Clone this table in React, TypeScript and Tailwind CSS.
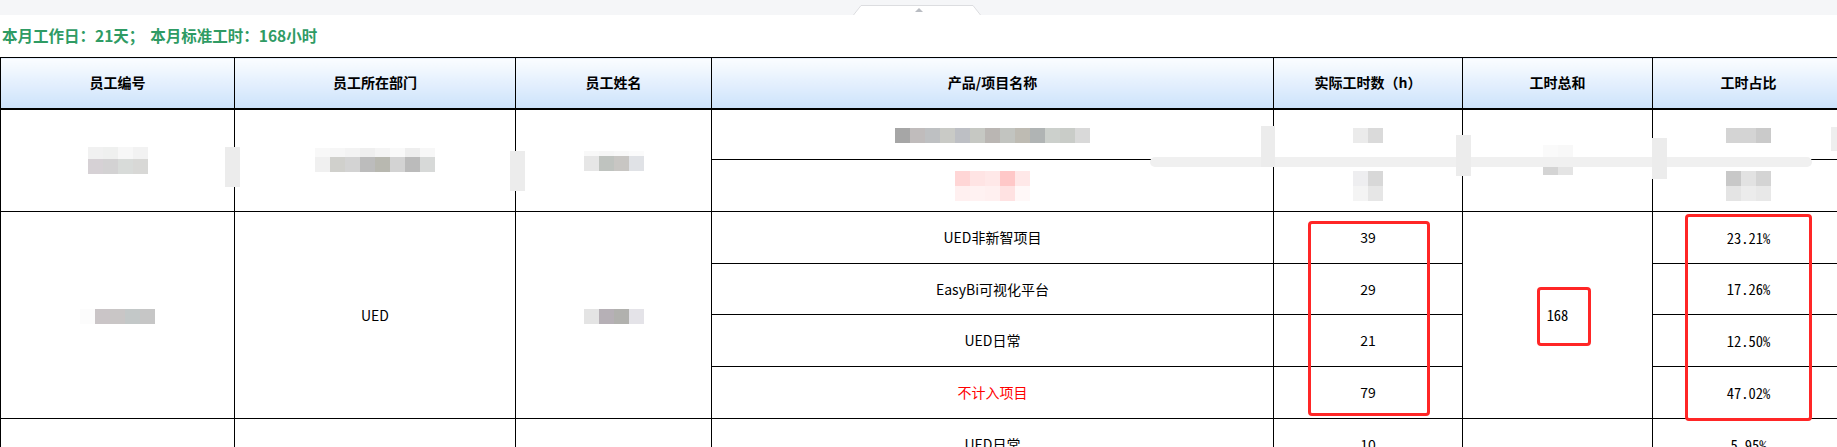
import React from 'react';

const COLS = [234, 281, 196, 562, 189, 190, 192];

type MRow = { h: string; c: string[] };

// pixelated redaction blocks
function Mosaic({ rows, w = 'w-[15px]' }: { rows: MRow[]; w?: string }) {
  return (
    <div className="inline-flex flex-col align-middle">
      {rows.map((r, i) => (
        <div key={i} className="flex">
          {r.c.map((c, j) => (
            <div key={j} className={`${w} ${r.h} ${c}`} />
          ))}
        </div>
      ))}
    </div>
  );
}

const cell = 'border border-black text-center align-middle p-0';
const sub = `${cell} h-[52px]`;
const subS = `${cell} h-[51px]`;
const mono = "font-['Noto_Sans_Mono_CJK_SC','DejaVu_Sans_Mono',monospace] text-[14.5px]";

function Th({ children }: { children: React.ReactNode }) {
  return (
    <th className="border border-black border-b-2 h-[51px] p-0 text-center align-middle text-[14px] font-bold text-black bg-linear-to-b from-[#fbfdff] to-[#cce2fb]">
      {children}
    </th>
  );
}

export default function App() {
  return (
    <div className="relative w-[1837px] h-[447px] overflow-hidden bg-white font-['Noto_Sans_CJK_SC','Noto_Sans',sans-serif] text-black">
      {/* top collapsed bar with handle */}
      <div className="relative h-[15px] bg-[#f5f6f8]">
        <svg className="absolute left-[853px] top-[5px]" width="128" height="10" viewBox="0 0 128 10">
          <path d="M0.5 10 L8 0.5 H120 L127.5 10" fill="#ffffff" stroke="#dcdde0" />
          <path d="M62 7 L66 3 L70 7 Z" fill="#b9bcc2" />
        </svg>
      </div>

      <div className="h-[42px] flex items-center pl-[2px] text-[15.5px] font-bold text-[#2f9b64]">
        <span>本月工作日：21天；</span>
        <span className="ml-[6px]">本月标准工时：168小时</span>
      </div>

      <table className="table-fixed border-collapse w-[1844px] text-[14px]">
        <colgroup>
          {COLS.map((w, i) => (
            <col key={i} style={{ width: w }} />
          ))}
        </colgroup>
        <thead>
          <tr>
            <Th>员工编号</Th>
            <Th>员工所在部门</Th>
            <Th>员工姓名</Th>
            <Th>产品/项目名称</Th>
            <Th>实际工时数（h）</Th>
            <Th>工时总和</Th>
            <Th>工时占比</Th>
          </tr>
        </thead>
        <tbody>
          <tr>
            <td rowSpan={2} className={cell}>
              <Mosaic
                rows={[
                  { h: 'h-[12px]', c: ['bg-[#f1f1f1]', 'bg-[#eff0ef]', 'bg-[#f7f7f7]', 'bg-[#f2f2f2]'] },
                  { h: 'h-[15px]', c: ['bg-[#d6d1d5]', 'bg-[#d3d2d3]', 'bg-[#d8dbd9]', 'bg-[#d8d8d6]'] },
                ]}
              />
            </td>
            <td rowSpan={2} className={cell}>
              <Mosaic
                rows={[
                  { h: 'h-[9px]', c: ['bg-[#f8f8f8]', 'bg-[#f6f6f6]', 'bg-[#f3f3f3]', 'bg-[#efefef]', 'bg-[#f4f4f4]', 'bg-[#f9f9f9]', 'bg-[#eeeeee]', 'bg-[#f7f7f7]'] },
                  { h: 'h-[15px]', c: ['bg-[#f0f0f0]', 'bg-[#d0d0cc]', 'bg-[#d3d3d3]', 'bg-[#bcbcbc]', 'bg-[#b8b8b0]', 'bg-[#d3d3d3]', 'bg-[#bbbbbb]', 'bg-[#d7d9d8]'] },
                ]}
              />
            </td>
            <td rowSpan={2} className={cell}>
              <Mosaic
                rows={[
                  { h: 'h-[5px]', c: ['bg-[#f8f8f8]', 'bg-[#f6f6f6]', 'bg-[#f8f8f8]', 'bg-[#fbfbfb]'] },
                  { h: 'h-[15px]', c: ['bg-[#e6e6e6]', 'bg-[#bfc3bf]', 'bg-[#c8c6c3]', 'bg-[#e0e2e6]'] },
                ]}
              />
            </td>
            <td className={subS}>
              <Mosaic
                rows={[
                  {
                    h: 'h-[15px]',
                    c: ['bg-[#a6a6a6]', 'bg-[#c0bcbc]', 'bg-[#bec0c2]', 'bg-[#c9cac6]', 'bg-[#bdbfc4]', 'bg-[#c6c8c3]', 'bg-[#bab6b3]', 'bg-[#c2c4c0]', 'bg-[#bebbb3]', 'bg-[#b0b4b4]', 'bg-[#ccd0cc]', 'bg-[#c9ccc8]', 'bg-[#d9d9d9]'],
                  },
                ]}
              />
            </td>
            <td className={subS}>
              <Mosaic rows={[{ h: 'h-[15px]', c: ['bg-[#ebebeb]', 'bg-[#dadada]'] }]} />
            </td>
            <td rowSpan={2} className={cell}>
              <Mosaic
                rows={[
                  { h: 'h-[15px]', c: ['bg-[#fafafa]', 'bg-[#f8f8f8]'] },
                  { h: 'h-[15px]', c: ['bg-[#d4d4d4]', 'bg-[#e4e4e4]'] },
                ]}
              />
            </td>
            <td className={subS}>
              <Mosaic rows={[{ h: 'h-[15px]', c: ['bg-[#d4d4d4]', 'bg-[#d4d4d4]', 'bg-[#cacaca]'] }]} />
            </td>
          </tr>
          <tr>
            <td className={sub}>
              <Mosaic
                rows={[
                  { h: 'h-[15px]', c: ['bg-[#ffd6d6]', 'bg-[#ffe4e4]', 'bg-[#ffe8e8]', 'bg-[#ffc8c8]', 'bg-[#ffe8e8]'] },
                  { h: 'h-[15px]', c: ['bg-[#fff0f0]', 'bg-[#fff2f2]', 'bg-[#fff0f0]', 'bg-[#ffe2e2]', 'bg-[#fff8f8]'] },
                ]}
              />
            </td>
            <td className={sub}>
              <Mosaic
                rows={[
                  { h: 'h-[15px]', c: ['bg-[#eeeef0]', 'bg-[#d8d8d8]'] },
                  { h: 'h-[15px]', c: ['bg-[#f4f4f4]', 'bg-[#e6e6e6]'] },
                ]}
              />
            </td>
            <td className={sub}>
              <Mosaic
                rows={[
                  { h: 'h-[15px]', c: ['bg-[#c8c8c8]', 'bg-[#e2e2e2]', 'bg-[#d4d4d4]'] },
                  { h: 'h-[15px]', c: ['bg-[#e4e4e4]', 'bg-[#ececec]', 'bg-[#e8e8e8]'] },
                ]}
              />
            </td>
          </tr>

          <tr>
            <td rowSpan={4} className={cell}>
              <Mosaic rows={[{ h: 'h-[15px]', c: ['bg-[#fcfcfc]', 'bg-[#cac5c7]', 'bg-[#c9c6c6]', 'bg-[#c3c8c8]', 'bg-[#c6c6c6]'] }]} />
            </td>
            <td rowSpan={4} className={cell}>UED</td>
            <td rowSpan={4} className={cell}>
              <Mosaic rows={[{ h: 'h-[15px]', c: ['bg-[#e4e4e4]', 'bg-[#b6b0b6]', 'bg-[#b1b1ae]', 'bg-[#e4e3e8]'] }]} />
            </td>
            <td className={sub}>UED非新智项目</td>
            <td className={sub}>39</td>
            <td rowSpan={4} className={`${cell} ${mono}`}>168</td>
            <td className={`${sub} ${mono}`}>23.21%</td>
          </tr>
          <tr>
            <td className={subS}>EasyBi可视化平台</td>
            <td className={subS}>29</td>
            <td className={`${subS} ${mono}`}>17.26%</td>
          </tr>
          <tr>
            <td className={sub}>UED日常</td>
            <td className={sub}>21</td>
            <td className={`${sub} ${mono}`}>12.50%</td>
          </tr>
          <tr>
            <td className={`${sub} text-[#ff0000]`}>不计入项目</td>
            <td className={sub}>79</td>
            <td className={`${sub} ${mono}`}>47.02%</td>
          </tr>

          <tr>
            <td rowSpan={3} className={cell}></td>
            <td rowSpan={3} className={cell}></td>
            <td rowSpan={3} className={cell}></td>
            <td className={sub}>UED日常</td>
            <td className={sub}>10</td>
            <td rowSpan={3} className={cell}></td>
            <td className={`${sub} ${mono}`}>5.95%</td>
          </tr>
        </tbody>
      </table>

      {/* redaction smears lying over the first row */}
      <div className="absolute left-[225px] top-[147px] w-[15px] h-[40px] bg-[#ececec]" />
      <div className="absolute left-[510px] top-[151px] w-[15px] h-[40px] bg-[#ececec]" />
      <div className="absolute left-[1150px] top-[157px] w-[662px] h-[10px] rounded-full bg-[#f0f0f0]" />
      <div className="absolute left-[1261px] top-[126px] w-[14px] h-[41px] bg-[#ececec]" />
      <div className="absolute left-[1456px] top-[135px] w-[15px] h-[41px] bg-[#ececec]" />
      <div className="absolute left-[1652px] top-[138px] w-[15px] h-[41px] bg-[#ececec]" />
      <div className="absolute left-[1831px] top-[127px] w-[6px] h-[24px] bg-[#eeeeee]" />

      {/* red annotation frames */}
      <div className="absolute left-[1308px] top-[221px] w-[122px] h-[195px] border-[3px] border-[#ff2626] rounded-[4px]" />
      <div className="absolute left-[1537px] top-[287px] w-[54px] h-[59px] border-[3px] border-[#ff2626] rounded-[4px]" />
      <div className="absolute left-[1685px] top-[214px] w-[127px] h-[207px] border-[3px] border-[#ff2626] rounded-[4px]" />
    </div>
  );
}
